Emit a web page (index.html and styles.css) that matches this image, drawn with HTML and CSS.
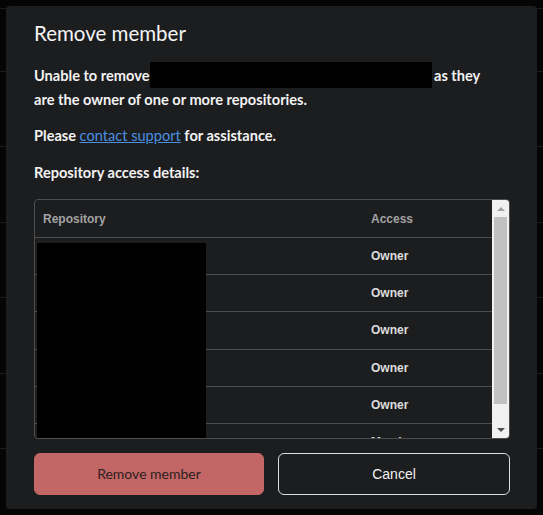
FILE: index.html
```html
<!DOCTYPE html>
<html lang="en">
<head>
<meta charset="utf-8">
<title>Remove member</title>
<link rel="stylesheet" href="styles.css">
</head>
<body>
<div class="dialog">
  <h2 class="title">Remove member</h2>
  <p class="text">Unable to remove <span class="redact-inline"></span>as they<br>are the owner of one or more repositories.</p>
  <p class="text">Please <a class="link" href="#">contact support</a> for assistance.</p>
  <p class="text subhead">Repository access details:</p>
  <div class="table-box">
    <div class="table-scroll">
      <div class="row head"><div class="c1">Repository</div><div class="c2">Access</div></div>
      <div class="row"><div class="c1"></div><div class="c2">Owner</div></div>
      <div class="row"><div class="c1"></div><div class="c2">Owner</div></div>
      <div class="row"><div class="c1"></div><div class="c2">Owner</div></div>
      <div class="row"><div class="c1"></div><div class="c2">Owner</div></div>
      <div class="row"><div class="c1"></div><div class="c2">Owner</div></div>
      <div class="row"><div class="c1"></div><div class="c2">Member</div></div>
      <div class="redact-block"></div>
    </div>
    <div class="scrollbar">
      <div class="arrow up"></div>
      <div class="thumb-area"><div class="thumb"></div></div>
      <div class="arrow down"></div>
    </div>
  </div>
  <div class="actions">
    <button class="btn danger">Remove member</button>
    <button class="btn outline">Cancel</button>
  </div>
</div>
</body>
</html>
```
FILE: styles.css
```css
html, body {
  margin: 0;
  height: 100%;
}
body {
  background-color: #050505;
  background-image: repeating-linear-gradient(180deg, #1c1c1c 0 1px, transparent 1px 75.4px);
  background-position: 0 71px;
  padding: 6px;
  box-sizing: border-box;
  font-family: Lato, "Liberation Sans", sans-serif;
  color: #f2f2f2;
}
.dialog {
  width: 531px;
  height: 503px;
  box-sizing: border-box;
  background: #1c1d1f;
  border-radius: 4px;
  padding: 13px 27px 14px 28px;
  display: flex;
  flex-direction: column;
}
.title {
  margin: 0;
  font-size: 20.5px;
  font-weight: 400;
  line-height: 28px;
  color: #f4f4f4;
}
.text {
  margin: 15px 0 0;
  font-size: 14.6px;
  font-weight: 700;
  line-height: 23px;
}
.text + .text { margin-top: 13px; }
.text.subhead { margin-top: 14px; }
.redact-inline {
  display: inline-block;
  width: 282px;
  height: 26px;
  background: #000;
  vertical-align: -7px;
  margin-left: -3px;
  margin-right: 2px;
}
.link {
  color: #4a8fe0;
  text-decoration: underline;
  font-weight: 400;
}
.table-box {
  margin-top: 15px;
  height: 240px;
  box-sizing: border-box;
  border: 1px solid #4d4d4d;
  border-radius: 4px;
  display: flex;
  overflow: hidden;
}
.table-scroll {
  flex: 1;
  position: relative;
  overflow: hidden;
}
.row {
  display: flex;
  height: 37.2px;
  box-sizing: border-box;
  border-bottom: 1px solid #4d4d4d;
  align-items: center;
  font-family: "Liberation Sans", Arial, sans-serif;
  font-size: 12px;
  font-weight: 700;
  color: #dedede;
}
.row.head { height: 38px; color: #a3a3a3; }
.c1 { width: 328px; padding-left: 8px; box-sizing: border-box; }
.c2 { flex: 1; padding-left: 8px; }
.redact-block {
  position: absolute;
  left: 2px;
  top: 43px;
  width: 169px;
  height: 200px;
  background: #000;
}
.scrollbar {
  width: 17px;
  background: #f1f1f1;
  display: flex;
  flex-direction: column;
}
.arrow {
  height: 17px;
  display: flex;
  align-items: center;
  justify-content: center;
}
.arrow::before {
  content: "";
  width: 0;
  height: 0;
  border-left: 4px solid transparent;
  border-right: 4px solid transparent;
}
.arrow.up::before { border-bottom: 4px solid #a3a3a3; }
.arrow.down::before { border-top: 4px solid #505050; }
.thumb-area {
  flex: 1;
  padding: 0 2px;
}
.thumb {
  height: 187px;
  background: #c1c1c1;
}
.actions {
  margin-top: 14px;
  display: grid;
  grid-template-columns: 230px 232px;
  gap: 14px;
}
.btn {
  height: 42px;
  border-radius: 6px;
  font-size: 14px;
  cursor: pointer;
}
.btn.danger {
  background: #c26666;
  border: 1px solid #c26666;
  color: #2e2020;
  font-family: Lato, "Liberation Sans", sans-serif;
  padding-bottom: 3px;
}
.btn.outline {
  background: transparent;
  border: 1px solid #dcdcdc;
  color: #f2f2f2;
  font-family: "Liberation Sans", Arial, sans-serif;
  font-size: 14px;
}
```
